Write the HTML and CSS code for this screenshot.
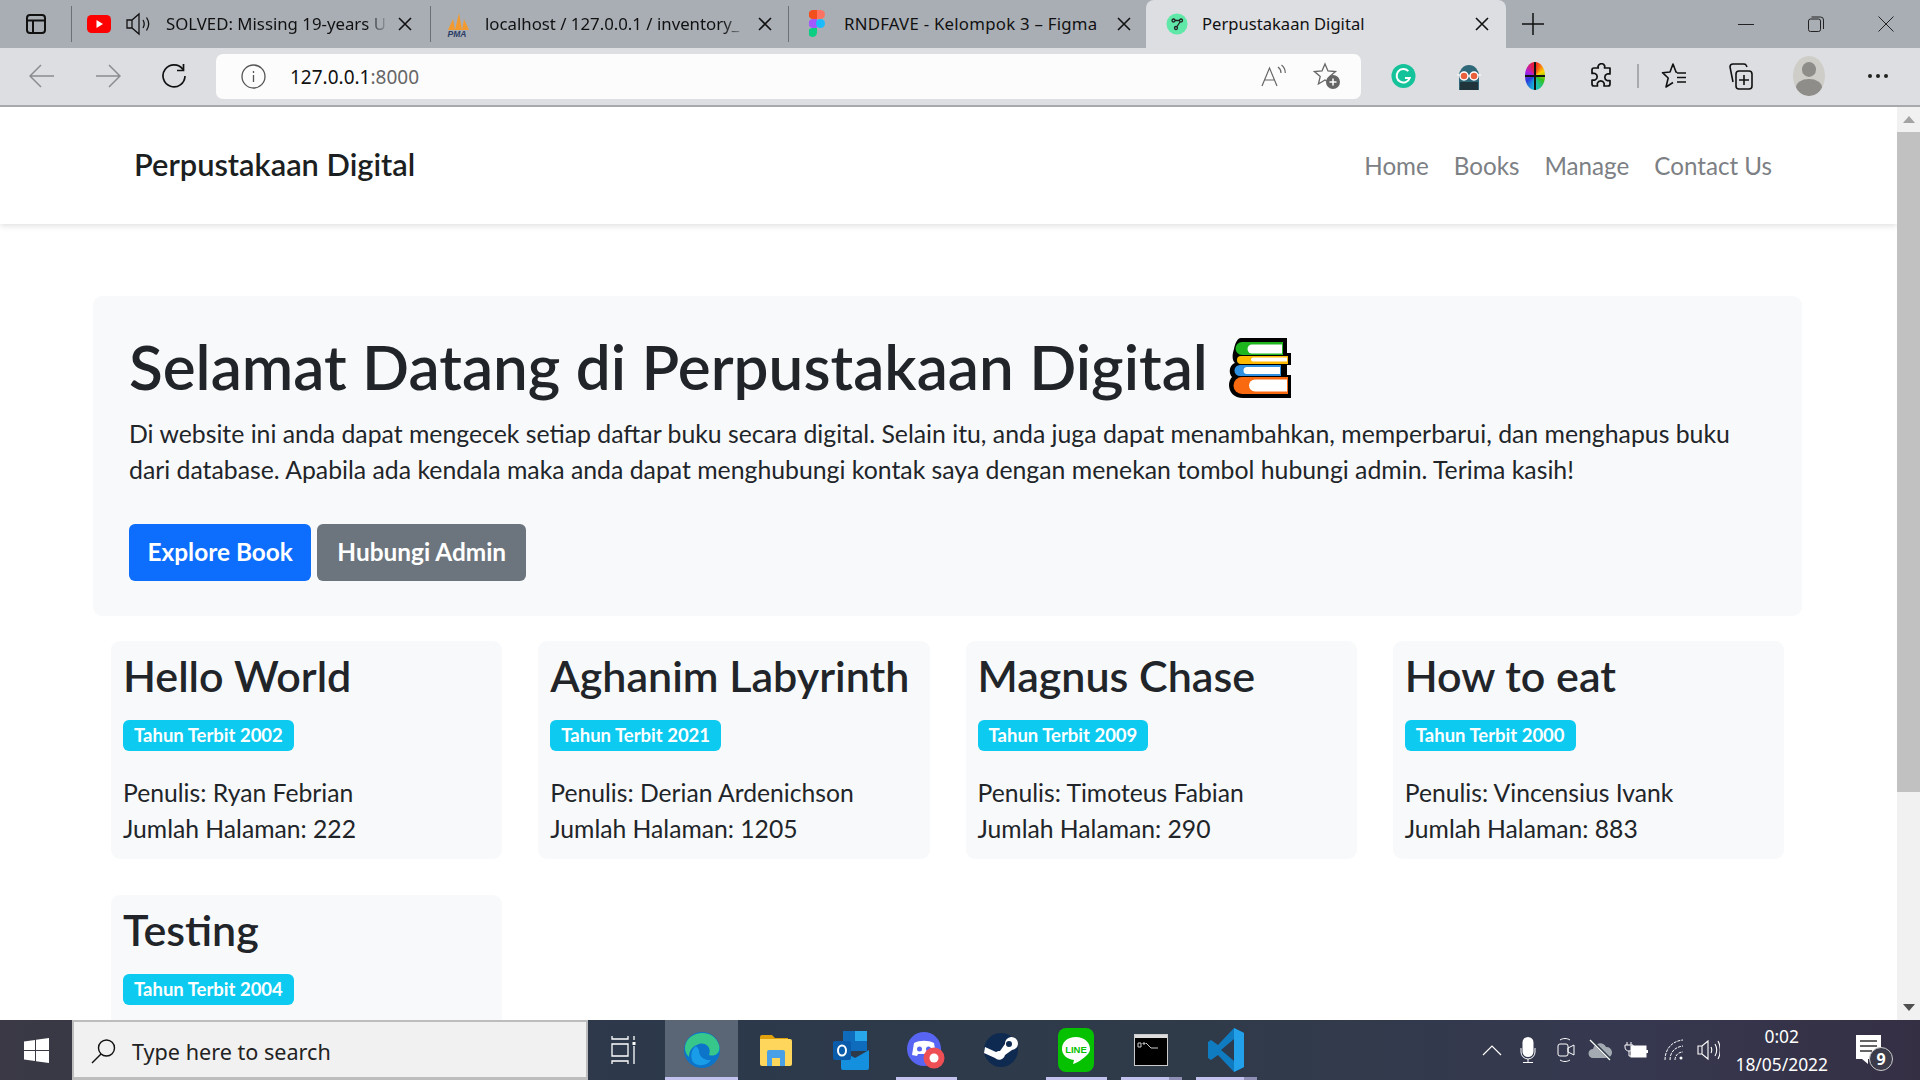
FILE: index.html
```html
<!DOCTYPE html>
<html lang="en">

<head>
    <meta charset="UTF-8">
    <title>Perpustakaan Digital</title>
    <link rel="stylesheet" href="styles.css">
</head>

<body>
    <!-- browser tabs -->
    <div class="tabbar">
        <div class="tab-side">
            <svg width="22" height="22" viewBox="0 0 22 22" fill="none" stroke="#111" stroke-width="2"><rect x="2" y="2" width="18" height="18" rx="3"/><path d="M2 7.500h18M8 7.500V20"/></svg>
        </div>
        <div class="tab tab-one">
            <svg class="fav" width="24" height="18" viewBox="0 0 24 18"><rect width="24" height="18" rx="4.500" fill="#f00"/><path d="M9.500 5l6.500 4-6.500 4z" fill="#fff"/></svg>
            <svg class="mute" width="24" height="26" viewBox="0 0 24 26" fill="none" stroke="#111" stroke-width="1.300"><path d="M1 9h5l7-6v20l-7-6H1zM6 9v8M17 9c1.500 2.500 1.500 5.500 0 8M20.500 6.500c2.700 4 2.700 9 0 13"/></svg>
            <span class="tab-title">SOLVED: Missing 19-years U</span>
            <svg class="close" width="14" height="14" viewBox="0 0 14 14" stroke="#111" stroke-width="1.600"><path d="M1 1l12 12M13 1L1 13"/></svg>
        </div>
        <div class="tab tab-two">
            <svg class="fav" width="23" height="26" viewBox="0 0 23 26"><path d="M1 19L6 8l2 11zM8 19L12 2l3 17zM15 19l2-11 5 11z" fill="#f29a2e"/><text x="0.500" y="25.500" class="pma">PMA</text></svg>
            <span class="tab-title">localhost / 127.0.0.1 / inventory_</span>
            <svg class="close" width="14" height="14" viewBox="0 0 14 14" stroke="#111" stroke-width="1.600"><path d="M1 1l12 12M13 1L1 13"/></svg>
        </div>
        <div class="tab tab-three">
            <svg class="fav" width="16" height="28" viewBox="0 0 16 28"><path d="M8 0H4a4.500 4.500 0 0 0 0 9h4z" fill="#f24e1e"/><path d="M8 0h3.500a4.500 4.500 0 0 1 0 9H8z" fill="#ff7262"/><path d="M8 9H4a4.500 4.500 0 0 0 0 9h4z" fill="#a259ff"/><circle cx="11.500" cy="13.500" r="4.500" fill="#1abcfe"/><path d="M8 18H4a4.500 4.500 0 1 0 4 4.500z" fill="#0acf83"/></svg>
            <span class="tab-title">RNDFAVE - Kelompok 3 &ndash; Figma</span>
            <svg class="close" width="14" height="14" viewBox="0 0 14 14" stroke="#111" stroke-width="1.600"><path d="M1 1l12 12M13 1L1 13"/></svg>
        </div>
        <div class="tab tab-active">
            <svg class="fav" width="22" height="22" viewBox="0 0 22 22" fill="none" stroke="#222" stroke-width="1.300"><circle cx="11" cy="11" r="10.500" fill="#5fe8a8" stroke="none"/><circle cx="7.500" cy="7.500" r="1.500"/><circle cx="15" cy="7.500" r="1.500"/><circle cx="10" cy="15" r="1.500"/><path d="M9 7.500h4.500M14 9l-3 4.500"/></svg>
            <span class="tab-title">Perpustakaan Digital</span>
            <svg class="close" width="14" height="14" viewBox="0 0 14 14" stroke="#111" stroke-width="1.600"><path d="M1 1l12 12M13 1L1 13"/></svg>
        </div>
        <div class="tab-new">
            <svg width="22" height="22" viewBox="0 0 22 22" stroke="#111" stroke-width="1.500"><path d="M11 0v22M0 11h22"/></svg>
        </div>
        <div class="win-controls">
            <svg width="16" height="16" viewBox="0 0 16 16" stroke="#222" stroke-width="1"><path d="M0 8.500h16"/></svg>
            <svg width="16" height="16" viewBox="0 0 16 16" fill="none" stroke="#222" stroke-width="1"><rect x="0.500" y="3" width="12" height="12.500" rx="2"/><path d="M3.500 1h9a3 3 0 0 1 3 3v9"/></svg>
            <svg width="16" height="16" viewBox="0 0 16 16" stroke="#222" stroke-width="1"><path d="M0.500 0.500l15 15M15.500 0.500l-15 15"/></svg>
        </div>
    </div>

    <!-- address bar -->
    <div class="toolbar">
        <div class="tool-btn"><svg width="26" height="24" viewBox="0 0 26 24" fill="none" stroke="#8a8c90" stroke-width="1.500"><path d="M25 12H1M12 1L1 12l11 11"/></svg></div>
        <div class="tool-btn"><svg width="26" height="24" viewBox="0 0 26 24" fill="none" stroke="#8a8c90" stroke-width="1.500"><path d="M1 12h24M14 1l11 11-11 11"/></svg></div>
        <div class="tool-btn"><svg width="26" height="26" viewBox="0 0 26 26" fill="none" stroke="#111" stroke-width="1.700"><path d="M22 6.500A11 11 0 1 0 24 13"/><path d="M22.500 1v6.500H16"/></svg></div>
        <div class="address">
            <svg class="info" width="25" height="25" viewBox="0 0 25 25" fill="none" stroke="#555" stroke-width="1.300"><circle cx="12.500" cy="12.500" r="11.500"/><path d="M12.500 11v7M12.500 7v2"/></svg>
            <span class="url">127.0.0.1<span class="port">:8000</span></span>
            <svg class="read" width="26" height="24" viewBox="0 0 26 24" fill="none" stroke="#666" stroke-width="1.200"><path d="M1 22L8.500 4 16 22M3.500 16h10M17 3c2 1.500 3 3.500 3 6M20.500 1c2.500 2 3.800 5 3.800 8"/></svg>
            <svg class="star-add" width="28" height="28" viewBox="0 0 28 28"><path d="M12 2l3 7 7.500.6-5.700 5 1.800 7.400L12 18l-6.600 4 1.800-7.400-5.700-5L9 9z" fill="none" stroke="#666" stroke-width="1.300"/><circle cx="20" cy="20" r="7" fill="#666"/><path d="M20 16.500v7M16.500 20h7" stroke="#fff" stroke-width="1.500"/></svg>
        </div>
        <div class="tool-icons">
            <div class="tool-btn"><svg width="25" height="26" viewBox="0 0 26 26"><circle cx="13" cy="13" r="12.500" fill="#15c39a"/><path d="M18 8a7 7 0 1 0 1.500 7h-5" fill="none" stroke="#fff" stroke-width="2"/></svg></div>
            <div class="tool-btn"><svg width="24" height="28" viewBox="0 0 24 28"><path d="M2 14a10 11 0 0 1 20 0v14H2z" fill="#2f6878"/><rect x="3" y="20" width="18" height="8" fill="#20343c"/><circle cx="7" cy="14" r="4" fill="#e9603c" stroke="#fff" stroke-width="1.500"/><circle cx="17" cy="14" r="4" fill="#e9603c" stroke="#fff" stroke-width="1.500"/><path d="M0 13h3M21 13h3M11 14h2" stroke="#fff" stroke-width="1.200"/></svg></div>
            <div class="tool-btn"><span class="wheel"></span></div>
            <div class="tool-btn"><svg width="24" height="26" viewBox="0 0 24 26" fill="none" stroke="#111" stroke-width="1.700" stroke-linejoin="round"><path d="M9 4.500a3.500 3.500 0 0 1 6.500-1c.5 1 .2 1.800 0 2.500H21v6c-1 0-2-.5-3 0a3.500 3.500 0 0 0 0 6.500c1 .4 2 0 3 0v3.500a2 2 0 0 1-2 2h-4c0-1 .4-2 0-3a3.500 3.500 0 0 0-6.500 0c-.4 1 0 2 0 3H5a2 2 0 0 1-2-2v-4c1 0 2 .4 3 0a3.500 3.500 0 0 0 0-6.500c-1-.4-2 0-3 0V8a2 2 0 0 1 2-2h4.300c-.2-.5-.3-1-.3-1.500z" transform="translate(0 -1)"/></svg></div>
            <span class="tool-sep"></span>
            <div class="tool-btn"><svg width="26" height="28" viewBox="0 0 26 28" fill="none" stroke="#111" stroke-width="1.600" stroke-linejoin="round"><path d="M16 10.500L15 10 12 2 9 10l-7.500.7 5.700 5.300L5 25l7-4.500M16 11h9M16 15.500h9M16 20h9"/></svg></div>
            <div class="tool-btn"><svg width="26" height="28" viewBox="0 0 26 28" fill="none" stroke="#111" stroke-width="1.600"><rect x="9" y="9" width="16" height="18" rx="3"/><path d="M17 13v10M12 18h10M20 5l-1-2c-.5-1-1.500-1-2.500-1H6a3 3 0 0 0-3 3v0l3 15"/></svg></div>
            <div class="tool-btn tool-avatar"><span class="avatar"><span class="avatar-head"></span><span class="avatar-body"></span></span></div>
            <div class="tool-btn dots"><i></i><i></i><i></i></div>
        </div>
    </div>

    <!-- the page inside the browser -->
    <div class="viewport">
        <div class="page">
            <nav class="navbar">
                <a class="brand">Perpustakaan Digital</a>
                <ul class="nav-links">
                    <li>Home</li>
                    <li>Books</li>
                    <li>Manage</li>
                    <li>Contact Us</li>
                </ul>
            </nav>

            <div class="container">
                <div class="hero">
                    <h1 class="hero-title">
                        Selamat Datang di Perpustakaan Digital
                        <svg class="books" width="62" height="60" viewBox="0 0 62 60">
                            <path d="M12 0h46v15h4v12h-4v10h4v23H14C5 60 0 54 0 47c0-3 1-6 3-8-3-3-3-9 0-12 1-1 2-2 3-2-3-3-3-8-1-14 1-5 3-11 7-11z" fill="#000"/>
                            <path d="M13 4h41v13H13a6.500 6.500 0 0 1 0-13z" fill="#1eb51e"/>
                            <path d="M23 6.500h30v9H23a4.500 4.500 0 0 1 0-9z" fill="#fff"/>
                            <path d="M12 18h47v8H12a4 4 0 0 1 0-8z" fill="#ffb900"/>
                            <path d="M24 19.500h34v4H24a2 2 0 0 1 0-4z" fill="#fff"/>
                            <path d="M11 27h41v11H11a5.500 5.500 0 0 1 0-11z" fill="#2f8fe0"/>
                            <path d="M18 29h33v7H18a3.500 3.500 0 0 1 0-7z" fill="#fff"/>
                            <path d="M13 39h46v17H13a8.500 8.500 0 0 1 0-17z" fill="#f96a10"/>
                            <path d="M26 41.500h32v12H26a6 6 0 0 1 0-12z" fill="#fff"/>
                        </svg>
                    </h1>
                    <p class="hero-text">Di website ini anda dapat mengecek setiap daftar buku secara digital. Selain itu, anda juga dapat menambahkan, memperbarui, dan menghapus buku dari database. Apabila ada kendala maka anda dapat menghubungi kontak saya dengan menekan tombol hubungi admin. Terima kasih!</p>
                    <div class="hero-buttons">
                        <a class="btn btn-primary">Explore Book</a>
                        <a class="btn btn-secondary">Hubungi Admin</a>
                    </div>
                </div>

                <div class="book-grid">
                    <div class="book-card">
                        <h2>Hello World</h2>
                        <span class="badge">Tahun Terbit 2002</span>
                        <p>Penulis: Ryan Febrian<br>Jumlah Halaman: 222</p>
                    </div>
                    <div class="book-card">
                        <h2>Aghanim Labyrinth</h2>
                        <span class="badge">Tahun Terbit 2021</span>
                        <p>Penulis: Derian Ardenichson<br>Jumlah Halaman: 1205</p>
                    </div>
                    <div class="book-card">
                        <h2>Magnus Chase</h2>
                        <span class="badge">Tahun Terbit 2009</span>
                        <p>Penulis: Timoteus Fabian<br>Jumlah Halaman: 290</p>
                    </div>
                    <div class="book-card">
                        <h2>How to eat</h2>
                        <span class="badge">Tahun Terbit 2000</span>
                        <p>Penulis: Vincensius Ivank<br>Jumlah Halaman: 883</p>
                    </div>
                    <div class="book-card">
                        <h2>Testing</h2>
                        <span class="badge">Tahun Terbit 2004</span>
                    </div>
                </div>
            </div>
        </div>

        <div class="scrollbar">
            <span class="arrow-up"></span>
            <div class="scroll-track"><div class="scroll-thumb"></div></div>
            <span class="arrow-down"></span>
        </div>
    </div>

    <!-- windows taskbar -->
    <div class="taskbar">
        <div class="start">
            <svg width="25" height="25" viewBox="0 0 25 25" fill="#fff"><path d="M0 3.500l11-1.500v10H0zM12 1.800L25 0v12H12zM0 13h11v10L0 21.500zM12 13h13v12l-13-1.800z"/></svg>
        </div>
        <div class="search">
            <svg width="26" height="26" viewBox="0 0 26 26" fill="none" stroke="#111" stroke-width="1.400"><circle cx="15.500" cy="10" r="8"/><path d="M10 16L1 25"/></svg>
            <span>Type here to search</span>
        </div>
        <div class="task-slot task-view">
            <svg width="26" height="28" viewBox="0 0 26 28" fill="none" stroke="#fff" stroke-width="1.300"><path d="M1 0v3h16V0M1 8h16v12H1zM1 28v-3h16v3M23 0v4M23 10v18"/><rect x="21.500" y="6" width="3" height="3" fill="#fff" stroke="none"/></svg>
        </div>
        <div class="task-slot app app-on app-active">
            <svg width="38" height="38" viewBox="0 0 38 38"><circle cx="19" cy="19" r="18" fill="#0c74c9"/><path d="M3 12C8 0 30-3 36 14c2 8-4 12-10 10 3-8-4-13-10-11C9 15 6 20 6 26 2 22 1 17 3 12z" fill="#38c78b"/><path d="M16 20c0 5 5 10 12 9-4 6-13 7-18 2-3-4-2-13 3-16 1 1 3 3 3 5z" fill="#1a9de8"/></svg>
        </div>
        <div class="task-slot app">
            <svg width="34" height="32" viewBox="0 0 34 32"><path d="M1 3a2 2 0 0 1 2-2h10l3 3h13v6H1z" fill="#e1a10c"/><path d="M1 5h30a2 2 0 0 1 2 2v23a2 2 0 0 1-2 2H3a2 2 0 0 1-2-2z" fill="#ffd65c"/><path d="M10 16h14a2 2 0 0 1 2 2v14h-5v-8h-8v8H8V18a2 2 0 0 1 2-2z" fill="#4aa0e6"/></svg>
        </div>
        <div class="task-slot app">
            <svg width="36" height="40" viewBox="0 0 36 40"><path d="M10 1h24v20H10z" fill="#0f6cbd"/><path d="M22 1h12v10H22z" fill="#28a8ea"/><path d="M8 20l14 8 14-8v18a2 2 0 0 1-2 2H10a2 2 0 0 1-2-2z" fill="#1490df"/><rect y="11" width="18" height="19" rx="2" fill="#0a5cab"/><ellipse cx="9" cy="20.500" rx="4" ry="5" fill="none" stroke="#fff" stroke-width="2"/></svg>
        </div>
        <div class="task-slot app app-on">
            <svg width="38" height="40" viewBox="0 0 38 40"><circle cx="17" cy="19" r="17" fill="#5865f2"/><path d="M7 13c6-3 14-3 20 0l2 12-5 1-1-2H11l-1 2-5-1z" fill="#fff"/><circle cx="12.500" cy="19" r="2.500" fill="#5865f2"/><circle cx="21.500" cy="19" r="2.500" fill="#5865f2"/><circle cx="27" cy="28" r="10.500" fill="#ed4f55"/><circle cx="27" cy="28" r="4.500" fill="#fff"/></svg>
        </div>
        <div class="task-slot app">
            <svg width="36" height="36" viewBox="0 0 36 36"><circle cx="18" cy="18" r="17" fill="#0e2a50"/><path d="M1 21l11 5a6 6 0 0 0 10-3l7-5a6.500 6.500 0 1 0-7-6l-5 7c-2 0-3 .5-4 1L2 15z" fill="#fff"/><circle cx="26" cy="12" r="3" fill="#0e2a50"/></svg>
        </div>
        <div class="task-slot app app-on">
            <svg width="36" height="44" viewBox="0 0 36 44"><rect width="36" height="44" rx="8" fill="#06c100"/><path d="M18 9C9 9 4 14 4 21c0 6 5 10 12 11l-1 4c4-1 10-5 14-9 2-2 3-4 3-6 0-7-6-12-14-12z" fill="#fff"/><text x="18" y="25" class="line-text">LINE</text></svg>
        </div>
        <div class="task-slot app app-on app-split">
            <svg width="34" height="32" viewBox="0 0 34 32"><rect x="0.500" y="0.500" width="33" height="31" fill="#000" stroke="#ccc"/><rect x="1" y="1" width="32" height="3" fill="#ddd"/><path d="M4 9h3v4H4zM9 9h2v1H9zM12 9l5 5h7" fill="none" stroke="#ccc"/></svg>
        </div>
        <div class="task-slot app app-on app-split">
            <svg width="36" height="44" viewBox="0 0 36 44"><path d="M26 0l10 5v34l-10 5-16-17-7 5-3-2v-16l3-2 7 5z" fill="#0f7cc2"/><path d="M26 11v22L13 22z" fill="#2d3a4d"/><path d="M26 0l10 5v34l-10 5z" fill="#23a0ea"/></svg>
        </div>

        <div class="tray">
            <svg class="tray-chev" width="20" height="11" viewBox="0 0 20 11" fill="none" stroke="#fff" stroke-width="1.200"><path d="M1 10l9-9 9 9"/></svg>
            <svg class="tray-mic" width="16" height="26" viewBox="0 0 16 26"><rect x="2.500" width="11" height="20" rx="5.500" fill="#fff"/><path d="M1 11v4a7 7 0 0 0 14 0v-4M8 22v3.500M3 25.500h10" fill="none" stroke="#fff"/></svg>
            <svg class="tray-cam" width="18" height="26" viewBox="0 0 18 26" fill="none" stroke="#fff"><rect x="1" y="7" width="10" height="12" rx="2"/><path d="M11 11l6-3v10l-6-3zM3 3c3-2 7-2 10 0M3 23c3 2 7 2 10 0"/></svg>
            <svg class="tray-cloud" width="24" height="22" viewBox="0 0 24 22"><path d="M5 19a4.500 4.500 0 0 1 0-9 7 7 0 0 1 13-2 5.500 5.500 0 0 1 1 11z" fill="#a4aab2"/><path d="M3 1l20 20" stroke="#2e3a48" stroke-width="3"/><path d="M2 1l20 20" stroke="#fff" stroke-width="1.200"/></svg>
            <svg class="tray-batt" width="24" height="18" viewBox="0 0 24 18" fill="none" stroke="#fff"><path d="M3 1v3M7 1v3M1 4h8v2c0 3-2 4-4 4s-4-1-4-4zM5 10v5h3"/><rect x="7" y="5" width="15" height="11" fill="#fff"/><rect x="22" y="9" width="2" height="3" fill="#fff" stroke="none"/></svg>
            <svg class="tray-wifi" width="20" height="22" viewBox="0 0 20 22" fill="none" stroke="#fff"><path d="M1 21C1 10 8 2 19 1M6 21c0-8 5-13 13-14M11 21c0-4 3-8 8-8" stroke-dasharray="3 1"/><circle cx="17" cy="19" r="1.500" fill="#fff" stroke="none"/></svg>
            <svg class="tray-speaker" width="23" height="22" viewBox="0 0 23 22" fill="none" stroke="#fff" stroke-width="1.100"><path d="M1 7h4l6-5v18l-6-5H1zM5 7v8M14 8c1 2 1 4 0 6M18 5c2 3.500 2 8.500 0 12M21 2c3 5 3 13 0 18"/></svg>
            <div class="clock"><span>0:02</span><span>18/05/2022</span></div>
            <div class="notif">
                <svg width="25" height="30" viewBox="0 0 25 30"><path d="M0 0h25v24H12v5l-6-5H0z" fill="#fff"/><path d="M4 6h17M4 11h17M4 16h12" stroke="#333" stroke-width="1.500"/></svg>
                <span class="notif-count">9</span>
            </div>
        </div>
    </div>
</body>

</html>
```

FILE: styles.css
```css
html,
body {
    margin: 0;
    padding: 0;
    height: 100%;
}

body {
    display: flex;
    flex-direction: column;
    height: 100vh;
    overflow: hidden;
    font-family: 'Lato', 'Noto Sans', sans-serif;
    color: #212529;
    background-color: #fff;
}

svg {
    display: block;
    flex-shrink: 0;
}

/* browser tabs */
.tabbar {
    display: flex;
    align-items: stretch;
    height: 48px;
    flex-shrink: 0;
    background-color: #a9aeb5;
    font-family: 'Noto Sans', sans-serif;
    font-size: 16.8px;
    color: #111;
}

.tab-side {
    display: flex;
    align-items: center;
    justify-content: center;
    width: 71px;
}

.tab {
    display: flex;
    align-items: center;
    position: relative;
    box-sizing: border-box;
}

.tab::before {
    content: "";
    width: 1px;
    height: 36px;
    background-color: #6c7076;
    position: absolute;
    left: 0;
    top: 6px;
}

.tab-active::before {
    display: none;
}

.tab-one {
    width: 359px;
    padding-left: 16px;
}

.tab-one .mute {
    margin-left: 15px;
}

.tab-one .tab-title {
    margin-left: 16px;
    width: 223px;
}

.tab-two {
    width: 358px;
    padding-left: 17px;
}

.tab-two .tab-title {
    margin-left: 15px;
    width: 264px;
}

.tab-three {
    width: 358px;
    padding-left: 21px;
}

.tab-three .tab-title {
    margin-left: 19px;
    width: 264px;
    letter-spacing: 0.25px;
}

.tab-title {
    margin-bottom: 2px;
    white-space: nowrap;
    -webkit-mask-image: linear-gradient(to right, #000 90%, transparent 100%);
    mask-image: linear-gradient(to right, #000 90%, transparent 100%);
}

.tab-active .tab-title,
.tab-three .tab-title {
    -webkit-mask-image: none;
    mask-image: none;
}

.close {
    margin-left: 9px;
}

.tab-active {
    width: 360px;
    padding-left: 20px;
    background-color: #dcdee2;
    border-radius: 8px 8px 0 0;
}

.tab-active .tab-title {
    margin-left: 14px;
    width: 264px;
    font-size: 16.6px;
}

.tab-new {
    display: flex;
    align-items: center;
    margin-left: 16px;
}

.win-controls {
    display: flex;
    align-items: center;
    gap: 54px;
    margin-left: auto;
    padding-right: 26px;
}

/* address bar */
.toolbar {
    display: flex;
    align-items: center;
    height: 59px;
    flex-shrink: 0;
    box-sizing: border-box;
    padding: 0 9px 1px;
    background-color: #dcdee2;
    border-bottom: 2px solid #a7a9ad;
}

.tool-btn {
    display: flex;
    align-items: center;
    justify-content: center;
    width: 66px;
    flex-shrink: 0;
}

.address {
    display: flex;
    align-items: center;
    flex: 1;
    height: 45px;
    margin-left: 9px;
    padding: 0 20px 0 25px;
    background-color: #fcfcfc;
    border-radius: 7px;
}

.url {
    margin-left: 24px;
    padding-top: 1px;
    flex: 1;
    font-family: 'Noto Sans', sans-serif;
    font-size: 19px;
    color: #111;
}

.port {
    color: #666;
}

.star-add {
    margin-left: 26px;
}

.tool-icons {
    display: flex;
    align-items: center;
    margin-left: 9px;
}

.tool-sep {
    width: 2px;
    height: 24px;
    margin: 0 2px 0 3px;
    background-color: #a7a9ad;
}

.tool-avatar {
    margin: 0 3px;
}

.wheel {
    width: 20px;
    height: 28px;
    border-radius: 50%;
    background:
        linear-gradient(#111, #111) center / 100% 2px no-repeat,
        linear-gradient(#111, #111) center / 2px 100% no-repeat,
        conic-gradient(#f02020, #ffd400, #33c21d, #14c3d8, #2a3be0, #b01ee0, #f02020);
}

.avatar {
    display: flex;
    flex-direction: column;
    align-items: center;
    overflow: hidden;
    width: 32px;
    height: 40px;
    border-radius: 50%;
    background-color: #cfcdc8;
}

.avatar-head {
    width: 14px;
    height: 17px;
    margin-top: 6px;
    border-radius: 50%;
    background-color: #8f8d89;
}

.avatar-body {
    width: 26px;
    height: 20px;
    margin-top: 2px;
    border-radius: 50%;
    background-color: #8f8d89;
}

.dots {
    gap: 4px;
}

.dots i {
    width: 4px;
    height: 4px;
    border-radius: 50%;
    background-color: #222;
}

/* the page */
.viewport {
    display: flex;
    flex: 1;
    min-height: 0;
    overflow: hidden;
}

.page {
    flex: 1;
    min-width: 0;
}

.navbar {
    display: flex;
    align-items: center;
    justify-content: space-between;
    height: 117px;
    padding: 0 125px 0 134px;
    background-color: #fff;
    box-shadow: 0 2px 6px rgba(0, 0, 0, 0.12);
}

.brand {
    font-size: 30.8px;
    font-weight: 600;
    color: #1c1f22;
    margin-top: -2px;
}

.nav-links {
    display: flex;
    gap: 25px;
    margin: 0;
    padding: 0;
    list-style: none;
    font-size: 24.2px;
    color: #7c8084;
}

.container {
    padding: 72px 95px 0 93px;
}

.hero {
    box-sizing: border-box;
    height: 320px;
    padding: 36px;
    background-color: #f8f9fa;
    border-radius: 9px;
}

.hero-title {
    display: flex;
    align-items: center;
    gap: 21px;
    margin: 3px 0 0;
    height: 62px;
    font-size: 62px;
    font-weight: 600;
    white-space: nowrap;
}

.books {
    margin-top: 4px;
}

.hero-text {
    margin: 19px 0 0;
    font-size: 24.8px;
    line-height: 36px;
}

.hero-buttons {
    display: flex;
    gap: 6px;
    margin-top: 36px;
}

.btn {
    display: block;
    box-sizing: border-box;
    height: 57px;
    line-height: 56px;
    font-size: 24.4px;
    font-weight: 700;
    color: #fff;
    border-radius: 6px;
}

.btn-primary {
    padding: 0 18.5px;
    background-color: #0d6efd;
}

.btn-secondary {
    padding: 0 20px;
    background-color: #6c757d;
}

.book-grid {
    display: grid;
    grid-template-columns: repeat(4, 1fr);
    gap: 36px;
    margin: 25px 18px 0;
}

.book-card {
    box-sizing: border-box;
    height: 218px;
    padding: 12px;
    background-color: #f8f9fa;
    border-radius: 9px;
}

.book-card h2 {
    margin: 0;
    height: 56px;
    font-size: 43px;
    line-height: 46px;
    font-weight: 600;
    white-space: nowrap;
}

.badge {
    display: inline-block;
    height: 31px;
    margin-top: 11px;
    padding: 0 11px;
    line-height: 31px;
    font-size: 18.5px;
    font-weight: 700;
    color: #fff;
    background-color: #0dcaf0;
    border-radius: 6px;
}

.book-card p {
    margin: 24px 0 0;
    font-size: 24.7px;
    line-height: 36px;
}

.scrollbar {
    display: flex;
    flex-direction: column;
    align-items: center;
    width: 23px;
    flex-shrink: 0;
    background-color: #f1f1f1;
}

.arrow-up,
.arrow-down {
    width: 0;
    height: 0;
    margin: 9px 0;
    border-left: 6px solid transparent;
    border-right: 6px solid transparent;
}

.arrow-up {
    border-bottom: 7px solid #a3a3a3;
}

.arrow-down {
    border-top: 7px solid #505050;
}

.scroll-track {
    flex: 1;
    width: 100%;
}

.scroll-thumb {
    height: 660px;
    background-color: #c1c1c1;
}

/* windows taskbar */
.taskbar {
    display: flex;
    align-items: center;
    height: 60px;
    flex-shrink: 0;
    background: linear-gradient(to right, #3a3945 0%, #2c394b 35%, #2f3b49 60%, #36384f 85%, #352f44 100%);
    color: #fff;
    font-family: 'Noto Sans', sans-serif;
}

.start {
    display: flex;
    align-items: center;
    justify-content: center;
    width: 72px;
    height: 100%;
}

.search {
    display: flex;
    align-items: center;
    gap: 15px;
    box-sizing: border-box;
    width: 516px;
    height: 100%;
    padding: 3px 0 0 17px;
    background-color: #f1f1f1;
    border: 2px solid #bdbdbd;
    border-bottom-width: 3px;
    color: #222;
    font-size: 21.6px;
}

.task-slot {
    display: flex;
    align-items: center;
    justify-content: center;
    height: 100%;
    box-sizing: border-box;
    width: 75px;
    position: relative;
}

.task-view {
    width: 77px;
    justify-content: flex-start;
    padding-left: 23px;
}

.app-on::after {
    content: "";
    position: absolute;
    left: 8px;
    right: 6px;
    bottom: 0;
    height: 3px;
    background-color: #c3c1ee;
}

.app-active {
    width: 73px;
    background-color: #5a6675;
}

.app-active::after {
    left: 0;
    right: 0;
}

.app-split::after {
    background: linear-gradient(to right, #c3c1ee 78%, #8f8fb5 78%);
}

.pma {
    font: italic 700 8.5px 'Liberation Sans', sans-serif;
    fill: #2a3c66;
}

.line-text {
    font: 700 9.5px 'Liberation Sans', sans-serif;
    fill: #06c100;
    text-anchor: middle;
}

.tray {
    display: flex;
    align-items: center;
    margin-left: auto;
    padding-right: 39px;
}

.tray-mic {
    margin-left: 18px;
}

.tray-cam {
    margin-left: 21px;
}

.tray-cloud {
    margin-left: 13px;
}

.tray-batt {
    margin-left: 12px;
}

.tray-wifi {
    margin-left: 16px;
}

.tray-speaker {
    margin-left: 13px;
}

.clock {
    display: flex;
    flex-direction: column;
    align-items: center;
    margin-left: 15px;
    font-size: 17.4px;
    line-height: 28px;
}

.notif {
    position: relative;
    margin-left: 28px;
}

.notif-count {
    position: absolute;
    right: -12px;
    bottom: -6px;
    width: 24px;
    height: 24px;
    box-sizing: border-box;
    border: 1px solid #ccc;
    border-radius: 50%;
    background-color: #3b3b4a;
    text-align: center;
    font-size: 16px;
    font-weight: 700;
    line-height: 22px;
}
```
